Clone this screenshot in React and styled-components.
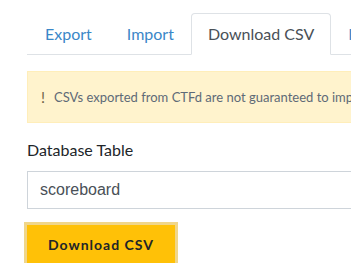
import React from "react";
import styled, { createGlobalStyle } from "styled-components";

const GlobalStyle = createGlobalStyle`
  body {
    margin: 0;
    background: #fff;
    font-family: Lato, "Noto Sans", sans-serif;
    color: #212529;
    overflow: hidden;
  }
`;

const Container = styled.div`
  padding: 13px 0 0 27px;
  width: 500px;
`;

const Tabs = styled.ul`
  display: flex;
  list-style: none;
  margin: 0;
  padding: 0 0 0 1px;
  border-bottom: 1px solid #dee2e6;
`;

const Tab = styled.li`
  flex-shrink: 0;
  margin-bottom: -1px;
  margin-right: ${(p) => (p.gap ? "1px" : "0")};
`;

const TabLink = styled.a`
  display: block;
  padding: 8px 16px;
  font-size: 16px;
  line-height: 24px;
  white-space: nowrap;
  border: 1px solid ${(p) => (p.active ? "#dee2e6" : "transparent")};
  border-bottom-color: ${(p) => (p.active ? "#fff" : "transparent")};
  border-radius: 4px 4px 0 0;
  color: ${(p) => (p.active ? "#495057" : "#3a87c8")};
  background: ${(p) => (p.active ? "#fff" : "transparent")};
  text-decoration: none;
`;

const Alert = styled.div`
  margin-top: 16px;
  padding: 12px 12px;
  height: 26px;
  background: #fff3cd;
  border: 1px solid #ffeeba;
  display: flex;
  align-items: center;
  gap: 9px;
  white-space: nowrap;
  font-size: 13px;
  color: #5e6a77;
`;

const Bang = styled.span`
  color: #6e6248;
  font-size: 15px;
  padding-left: 1px;
`;

const Label = styled.label`
  display: block;
  margin-top: 15px;
  font-size: 16px;
  line-height: 24px;
  color: #212529;
`;

const Select = styled.div`
  margin-top: 9px;
  height: 36px;
  border: 1px solid #ced4da;
  display: flex;
  align-items: center;
  padding-left: 12px;
  font-family: "Liberation Sans", Arial, sans-serif;
  font-size: 16px;
  color: #495057;
`;

const Button = styled.button`
  display: block;
  margin-top: 16px;
  width: 148px;
  height: 38px;
  border: 1px solid #ffc107;
  background: #ffc107;
  box-shadow: 0 0 0 3px #f0d68a;
  font-family: Lato, sans-serif;
  font-weight: 700;
  font-size: 14px;
  letter-spacing: 1px;
  color: #212529;
  padding: 0;
`;

export default function App() {
  return (
    <>
      <GlobalStyle />
      <Container>
        <Tabs>
          <Tab gap><TabLink>Export</TabLink></Tab>
          <Tab><TabLink>Import</TabLink></Tab>
          <Tab><TabLink active>Download CSV</TabLink></Tab>
          <Tab><TabLink>Import CSV</TabLink></Tab>
        </Tabs>
        <Alert>
          <Bang>!</Bang>
          <span>CSVs exported from CTFd are not guaranteed to import back into CTFd</span>
        </Alert>
        <Label>Database Table</Label>
        <Select>scoreboard</Select>
        <Button>Download CSV</Button>
      </Container>
    </>
  );
}
